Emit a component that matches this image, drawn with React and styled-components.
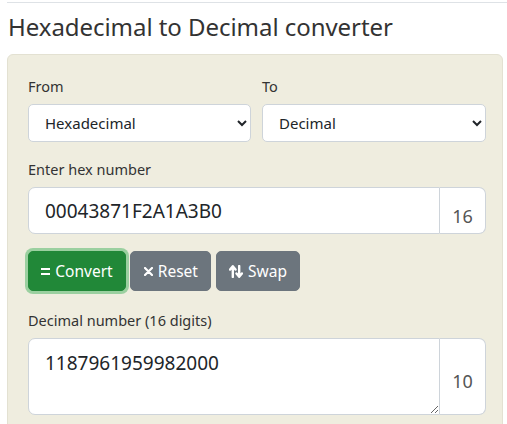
import React from "react";
import styled, { createGlobalStyle } from "styled-components";

const GlobalStyle = createGlobalStyle`
  html, body {
    margin: 0;
    padding: 0;
    background: #fff;
  }
  body {
    font-family: "Noto Sans", "Open Sans", Arial, sans-serif;
    color: #212529;
  }
`;

// Styled Components
const Page = styled.div`
  padding: 2px 4px 0 7px;
`;

const Divider = styled.div`
  border-top: 1px solid #dee2e6;
  margin-right: -4px;
`;

const Title = styled.h1`
  margin: 6px 0 0 1px;
  font-size: 24px;
  font-weight: 400;
  line-height: 36px;
  color: #333;
  letter-spacing: -0.05px;
`;

const Card = styled.div`
  margin-top: 9px;
  background-color: #efeddf;
  border: 1px solid #e3e1d2;
  border-radius: 6px;
  padding: 20px 16px 20px 20px;
  display: grid;
  gap: ${(props) => props.gap || "16px"};
`;

const Row = styled.div`
  display: grid;
  grid-template-columns: 223px 224px;
  gap: 11px;
`;

const Field = styled.div`
  display: flex;
  flex-direction: column;
`;

const Label = styled.label`
  font-size: 14.5px;
  line-height: 22px;
  color: #333;
  margin-bottom: ${(props) => props.marginBottom || "7px"};
`;

const Select = styled.select`
  height: 38px;
  padding: 0 8px 0 12px;
  font-family: inherit;
  font-size: 15px;
  color: #212529;
  background-color: #fff;
  border: 1px solid #ced4da;
  border-radius: 5px;
  outline: none;
`;

const Group = styled.div`
  display: flex;
  width: 458px;
`;

const Input = styled.input`
  flex: 1;
  min-width: 0;
  height: 47px;
  box-sizing: border-box;
  padding: 0 16px;
  font-family: inherit;
  font-size: 19px;
  color: #212529;
  background: #fff;
  border: 1px solid #ced4da;
  border-radius: 7px 0 0 7px;
  outline: none;
`;

const TextArea = styled.textarea`
  flex: 1;
  min-width: 0;
  height: 77px;
  box-sizing: border-box;
  padding: 10px 16px 6px;
  font-family: inherit;
  font-size: 19px;
  line-height: 28px;
  color: #212529;
  background: #fff;
  border: 1px solid #ced4da;
  border-radius: 7px 0 0 7px;
  outline: none;
  resize: vertical;
`;

const Addon = styled.span`
  width: 46px;
  box-sizing: border-box;
  display: flex;
  align-items: center;
  justify-content: center;
  padding-top: ${(props) => props.offset || "10px"};
  font-size: 18px;
  color: #555;
  background: #fff;
  border: 1px solid #ced4da;
  border-left: none;
  border-radius: 0 7px 7px 0;
`;

const Buttons = styled.div`
  display: flex;
  gap: 4.5px;
  margin-top: 1px;
  margin-bottom: 2px;
`;

const Button = styled.button`
  display: inline-flex;
  align-items: center;
  gap: 5px;
  height: 40px;
  padding: 0 12.3px;
  font-family: inherit;
  font-size: 15.5px;
  color: #fff;
  background-color: ${(props) => props.bgc || "#6c757d"};
  border: 1px solid ${(props) => props.bgc || "#6c757d"};
  border-radius: 5px;
  box-shadow: ${(props) =>
    props.focused ? "0 0 0 3px rgba(72, 180, 97, 0.5)" : "none"};
  cursor: pointer;
`;

const Icon = styled.svg`
  display: block;
  flex: none;
`;

// Icons
const EqualsIcon = () => (
  <Icon width="9" height="7" viewBox="0 0 9 7">
    <rect x="0" y="0" width="9" height="2" fill="#fff" />
    <rect x="0" y="5" width="9" height="2" fill="#fff" />
  </Icon>
);

const TimesIcon = () => (
  <Icon width="9" height="9" viewBox="0 0 9 9">
    <path d="M1 1 L8 8 M8 1 L1 8" stroke="#fff" strokeWidth="2.2" strokeLinecap="round" />
  </Icon>
);

const SwapIcon = () => (
  <Icon width="14" height="13" viewBox="0 0 14 13">
    <path
      d="M3.8 12 V2 M1.1 4.6 L3.8 1.3 L6.5 4.6 M10.2 1 V11 M7.5 8.4 L10.2 11.7 L12.9 8.4"
      stroke="#fff"
      strokeWidth="2.4"
      fill="none"
      strokeLinecap="round"
      strokeLinejoin="round"
    />
  </Icon>
);

const App = () => {
  return (
    <Page>
      <GlobalStyle />
      <Divider />
      <Title>Hexadecimal to Decimal converter</Title>
      <Card>
        <Row>
          <Field>
            <Label>From</Label>
            <Select defaultValue="hex">
              <option value="hex">Hexadecimal</option>
            </Select>
          </Field>
          <Field>
            <Label>To</Label>
            <Select defaultValue="dec">
              <option value="dec">Decimal</option>
            </Select>
          </Field>
        </Row>
        <Field>
          <Label>Enter hex number</Label>
          <Group>
            <Input defaultValue="00043871F2A1A3B0" />
            <Addon>16</Addon>
          </Group>
        </Field>
        <Buttons>
          <Button bgc="#218838" focused>
            <EqualsIcon />
            Convert
          </Button>
          <Button>
            <TimesIcon />
            Reset
          </Button>
          <Button>
            <SwapIcon />
            Swap
          </Button>
        </Buttons>
        <Field>
          <Label>Decimal number (16 digits)</Label>
          <Group>
            <TextArea defaultValue="1187961959982000" />
            <Addon offset="8px">10</Addon>
          </Group>
        </Field>
      </Card>
    </Page>
  );
};

export default App;
